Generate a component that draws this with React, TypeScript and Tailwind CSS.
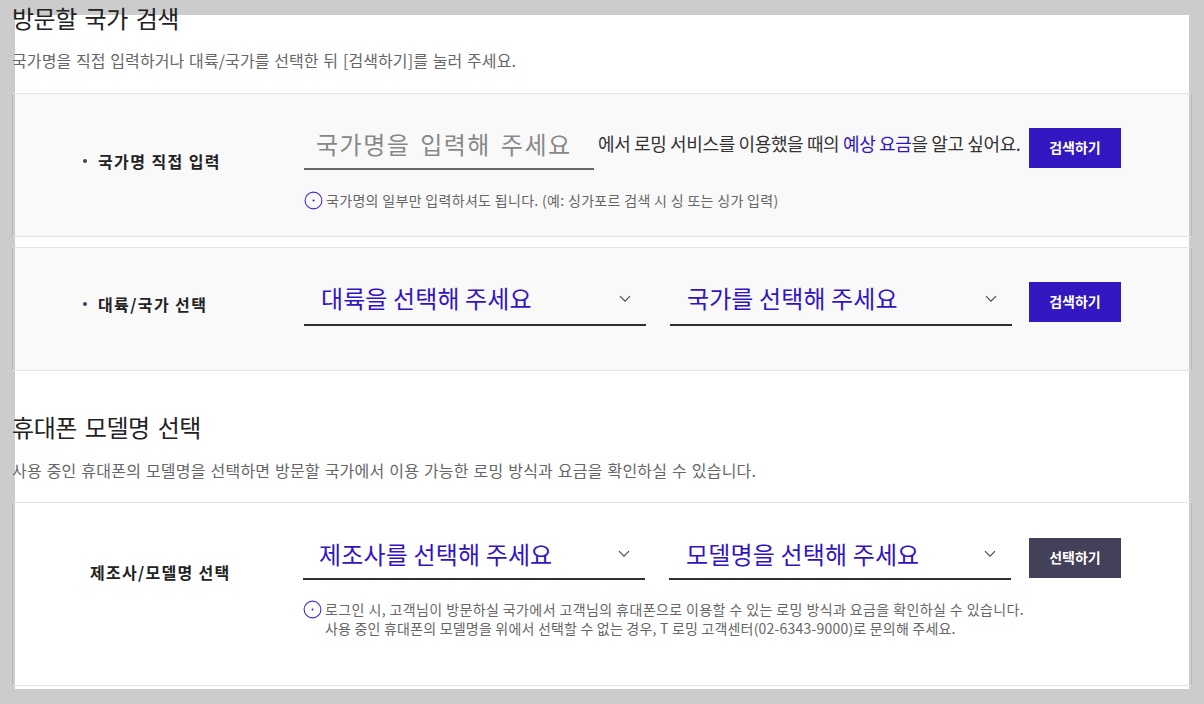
import React from "react";

const font = { fontFamily: '"Noto Sans CJK KR", "Noto Sans", sans-serif' };

function Info() {
  return (
    <svg width="19" height="19" viewBox="0 0 19 19" className="shrink-0">
      <circle cx="9.5" cy="9.5" r="8.4" fill="none" stroke="#4428cc" strokeWidth="1.1" />
      <circle cx="9.5" cy="9.5" r="1" fill="#3a1fc9" />
    </svg>
  );
}

function Chevron() {
  return (
    <svg width="12" height="8" viewBox="0 0 12 8" className="shrink-0">
      <path d="M1 1.2 L6 6.2 L11 1.2" fill="none" stroke="#444" strokeWidth="1.1" />
    </svg>
  );
}

function Sel({ text, cls, textCls }: { text: string; cls: string; textCls: string }) {
  return (
    <div className={`flex items-center justify-between border-b-2 border-[#2f2f2f] ${cls}`}>
      <span className={`text-[24px] leading-[36px] text-[#3213c4] whitespace-nowrap ${textCls}`}>{text}</span>
      <span className="mr-[15px] mb-[8px] flex"><Chevron /></span>
    </div>
  );
}

function Btn({ text, dark }: { text: string; dark?: boolean }) {
  return (
    <button className={`w-[92px] h-[40px] pb-[2px] shrink-0 text-[14px] font-bold text-white ${dark ? "bg-[#434059]" : "bg-[#3317c1]"}`}>
      {text}
    </button>
  );
}

export default function App() {
  return (
    <div style={font} className="h-[704px] w-[1204px] overflow-hidden bg-[#cccccc] pt-[15px] pl-[15px]">
      <div className="flow-root h-[674px] w-[1174px] bg-white">
        <div className="-ml-[3px] w-[1180px] -mt-[15px]">
          <h2 className="text-[24px] leading-[36px] text-[#222] tracking-[-0.5px] [word-spacing:3px]">방문할 국가 검색</h2>
          <p className="mt-[13px] text-[16px] leading-[22px] text-[#666] tracking-[0.1px] [word-spacing:1px]">
            국가명을 직접 입력하거나 대륙/국가를 선택한 뒤 [검색하기]를 눌러 주세요.
          </p>

          <div className="mt-[22px] h-[144px] border border-t-[#e4e4e4] border-b-[#e4e4e4] border-l-[#b8b8b8] border-r-[#bcbcbc] bg-[#f9f9f9] bg-clip-content px-[2px] flex">
            <div className="w-[289px] shrink-0 flex items-center pl-[67px] pb-[8px]">
              <span className="w-[4px] h-[4px] rounded-full bg-[#434059] ml-[1px]" />
              <span className="ml-[11px] text-[16px] font-bold text-[#222] tracking-[1.4px]">국가명 직접 입력</span>
            </div>
            <div className="flex-1 pt-[34px]">
              <div className="flex items-start">
                <div className="w-[290px] h-[42px] border-b-2 border-[#666] pl-[12px] text-[24px] leading-[32px] text-[#888] tracking-[1.5px] [word-spacing:3px] whitespace-nowrap">
                  국가명을 입력해 주세요
                </div>
                <div className="ml-[4px] w-[431px] text-[18px] leading-[30px] text-[#333] tracking-[-0.37px] whitespace-nowrap">
                  에서 로밍 서비스를 이용했을 때의 <span className="text-[#3213c4]">예상 요금</span>을 알고 싶어요.
                </div>
                <Btn text="검색하기" />
              </div>
              <div className="mt-[20px] flex items-center">
                <Info />
                <span className="ml-[3px] text-[14px] leading-[20px] text-[#666] tracking-[0.32px]">
                  국가명의 일부만 입력하셔도 됩니다. (예: 싱가포르 검색 시 싱 또는 싱가 입력)
                </span>
              </div>
            </div>
          </div>

          <div className="mt-[10px] h-[124px] border border-t-[#e4e4e4] border-b-[#e4e4e4] border-l-[#b8b8b8] border-r-[#bcbcbc] bg-[#f9f9f9] bg-clip-content px-[2px] flex">
            <div className="w-[289px] shrink-0 flex items-center pl-[67px] pb-[10px]">
              <span className="w-[4px] h-[4px] rounded-full bg-[#434059] ml-[1px]" />
              <span className="ml-[11px] text-[16px] font-bold text-[#222] tracking-[1.4px]">대륙/국가 선택</span>
            </div>
            <div className="flex-1 pt-[34px] flex items-start">
              <Sel text="대륙을 선택해 주세요" cls="w-[342px] h-[44px]" textCls="ml-[17px] mb-[10px] tracking-[0.1px]" />
              <Sel text="국가를 선택해 주세요" cls="ml-[24px] w-[342px] h-[44px]" textCls="ml-[17px] mb-[10px] tracking-[0.1px]" />
              <div className="ml-[17px]"><Btn text="검색하기" /></div>
            </div>
          </div>

          <h2 className="mt-[38px] text-[24px] leading-[36px] text-[#222] tracking-[-0.45px] [word-spacing:3px]">휴대폰 모델명 선택</h2>
          <p className="mt-[14px] text-[16px] leading-[22px] text-[#666] tracking-[0.22px] [word-spacing:1px]">
            사용 중인 휴대폰의 모델명을 선택하면 방문할 국가에서 이용 가능한 로밍 방식과 요금을 확인하실 수 있습니다.
          </p>

          <div className="mt-[21px] h-[184px] border border-t-[#e4e4e4] border-b-[#e4e4e4] border-l-[#b8b8b8] border-r-[#bcbcbc] px-[2px] flex">
            <div className="w-[288px] shrink-0 flex items-center pl-[75px] pb-[44px]">
              <span className="text-[16px] font-bold text-[#222] tracking-[1.3px]">제조사/모델명 선택</span>
            </div>
            <div className="flex-1 pt-[35px]">
              <div className="flex items-start">
                <Sel text="제조사를 선택해 주세요" cls="w-[342px] h-[42px]" textCls="ml-[16px] mb-[8px] tracking-[0.15px]" />
                <Sel text="모델명을 선택해 주세요" cls="ml-[24px] w-[342px] h-[42px]" textCls="ml-[17px] mb-[8px] tracking-[0.15px]" />
                <div className="ml-[18px]"><Btn text="선택하기" dark /></div>
              </div>
              <div className="mt-[20px] flex items-start">
                <Info />
                <p className="ml-[3px] text-[14px] leading-[19px] text-[#666] tracking-[0.2px] whitespace-nowrap">
                  <span className="tracking-[0.4px]">로그인 시, 고객님이 방문하실 국가에서 고객님의 휴대폰으로 이용할 수 있는 로밍 방식과 요금을 확인하실 수 있습니다.</span>
                  <br />
                  사용 중인 휴대폰의 모델명을 위에서 선택할 수 없는 경우, T 로밍 고객센터(02-6343-9000)로 문의해 주세요.
                </p>
              </div>
            </div>
          </div>
        </div>
      </div>
    </div>
  );
}
